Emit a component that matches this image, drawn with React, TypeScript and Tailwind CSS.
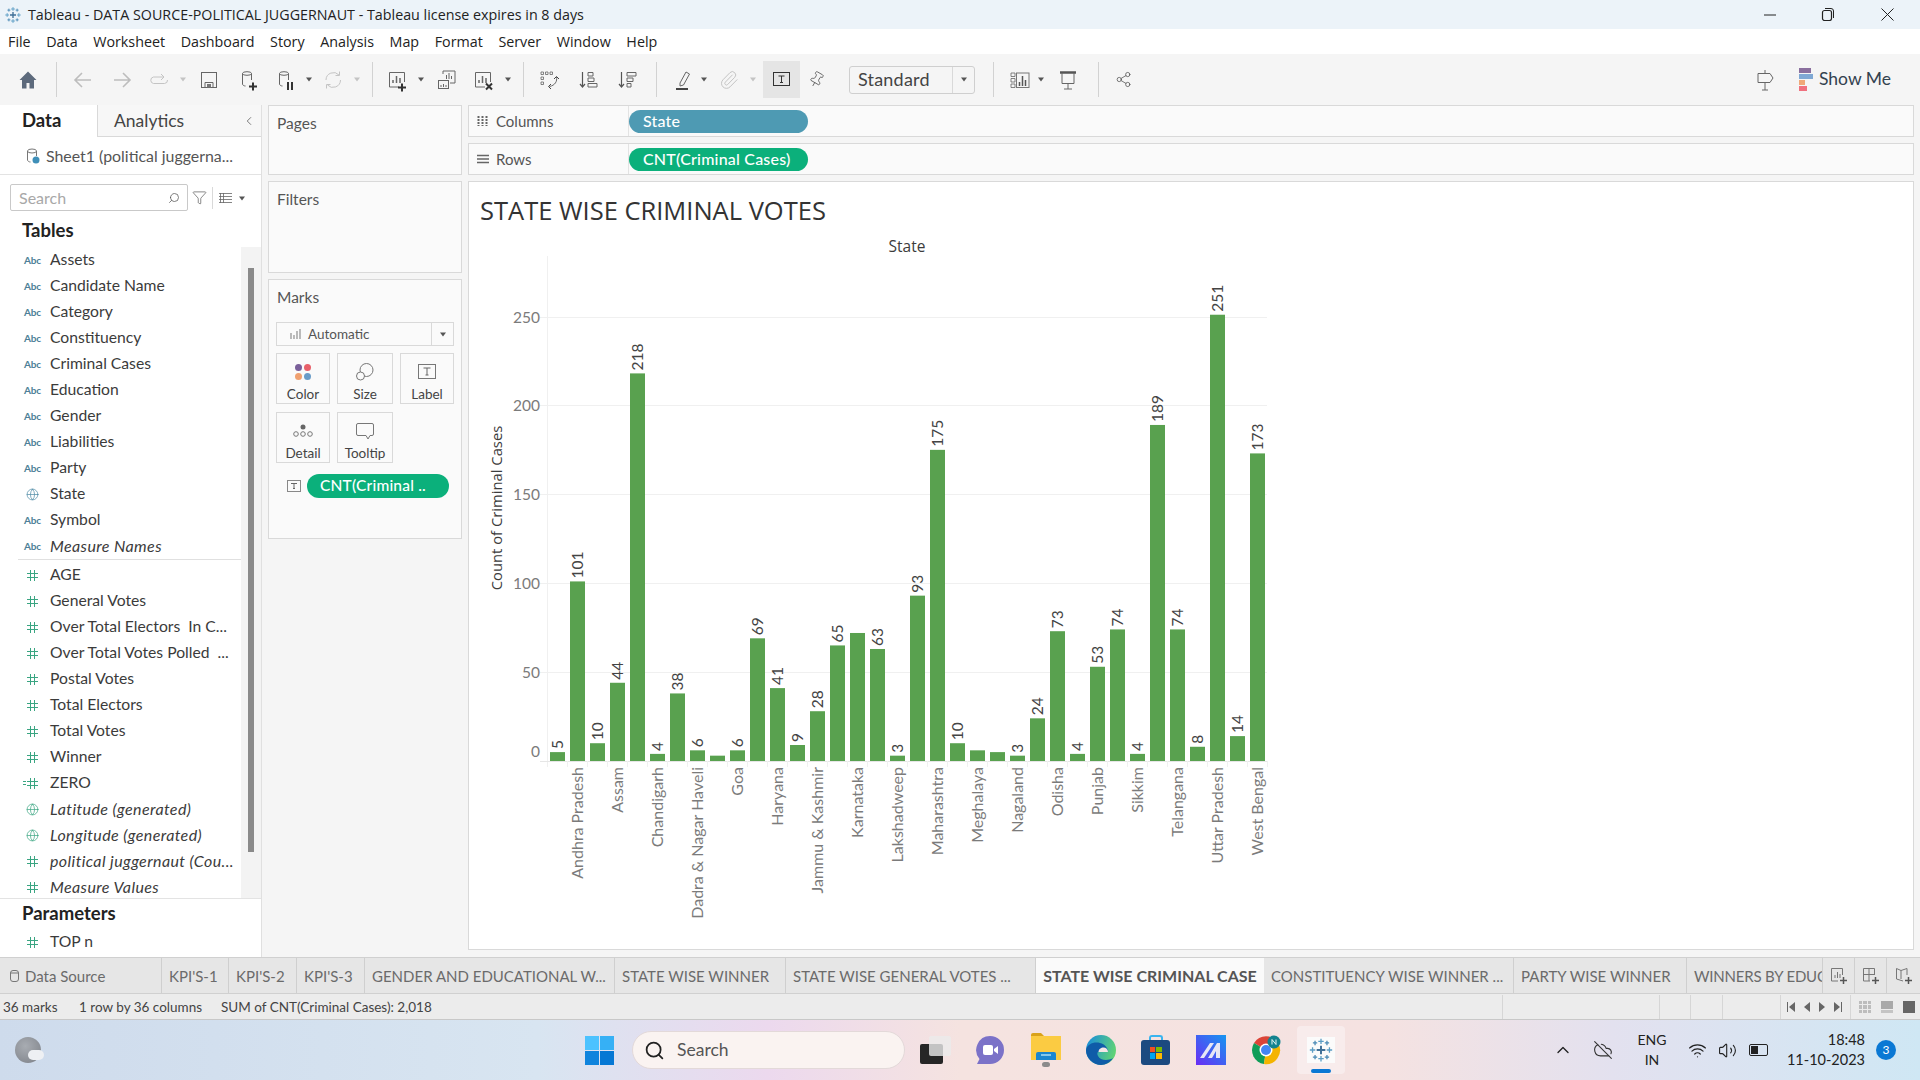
import type { ReactNode } from "react";
import { ChevronLeft, ChevronUp, CloudOff, Funnel, Globe, Paperclip, Pin, Search, Share2, Volume2, Wifi } from "lucide-react";

const menus = ["File", "Data", "Worksheet", "Dashboard", "Story", "Analysis", "Map", "Format", "Server", "Window", "Help"];

const tableFields = [
  { name: "Assets", kind: "abc" },
  { name: "Candidate Name", kind: "abc" },
  { name: "Category", kind: "abc" },
  { name: "Constituency", kind: "abc" },
  { name: "Criminal Cases", kind: "abc" },
  { name: "Education", kind: "abc" },
  { name: "Gender", kind: "abc" },
  { name: "Liabilities", kind: "abc" },
  { name: "Party", kind: "abc" },
  { name: "State", kind: "globe" },
  { name: "Symbol", kind: "abc" },
  { name: "Measure Names", kind: "abc", italic: true },
];

const measureFields = [
  { name: "AGE", kind: "num" },
  { name: "General Votes", kind: "num" },
  { name: "Over Total Electors  In C...", kind: "num" },
  { name: "Over Total Votes Polled  ...", kind: "num" },
  { name: "Postal Votes", kind: "num" },
  { name: "Total Electors", kind: "num" },
  { name: "Total Votes", kind: "num" },
  { name: "Winner", kind: "num" },
  { name: "ZERO", kind: "calc" },
  { name: "Latitude (generated)", kind: "geo", italic: true },
  { name: "Longitude (generated)", kind: "geo", italic: true },
  { name: "political juggernaut (Cou...", kind: "num", italic: true },
  { name: "Measure Values", kind: "num", italic: true },
];

// value, axis label (every other state), whether the mark label fits
const bars: [number, string, boolean][] = [
  [5, "", true], [101, "Andhra Pradesh", true], [10, "", true], [44, "Assam", true],
  [218, "", true], [4, "Chandigarh", true], [38, "", true], [6, "Dadra & Nagar Haveli", true],
  [3, "", false], [6, "Goa", true], [69, "", true], [41, "Haryana", true],
  [9, "", true], [28, "Jammu & Kashmir", true], [65, "", true], [72, "Karnataka", false],
  [63, "", true], [3, "Lakshadweep", true], [93, "", true], [175, "Maharashtra", true],
  [10, "", true], [6, "Meghalaya", false], [5, "", false], [3, "Nagaland", true],
  [24, "", true], [73, "Odisha", true], [4, "", true], [53, "Punjab", true],
  [74, "", true], [4, "Sikkim", true], [189, "", true], [74, "Telangana", true],
  [8, "", true], [251, "Uttar Pradesh", true], [14, "", true], [173, "West Bengal", true],
];

const Ico = ({ className = "", children }: { className?: string; children: ReactNode }) => (
  <svg width="24" height="24" viewBox="0 0 24 24" fill="none" className={`shrink-0 ${className}`}>
    {children}
  </svg>
);

const Caret = ({ className = "", muted = false }: { className?: string; muted?: boolean }) => (
  <svg width="8" height="5" viewBox="0 0 8 5" className={`shrink-0 ${className}`}>
    <path d="M1 .5h6L4 4.500z" fill={muted ? "#c4c4c4" : "#555"} />
  </svg>
);

const Sep = ({ className = "" }: { className?: string }) => <div className={`h-[35px] w-px shrink-0 bg-[#d2d2d2] ${className}`} />;

const Cyl = () => (
  <>
    <ellipse cx="11" cy="5.5" rx="4.5" ry="1.8" stroke="#666" />
    <path d="M6.500 5.500V16c0 1.200 1.500 2 3 2M15.500 5.500V12" stroke="#666" />
  </>
);

const SheetBars = () => (
  <>
    <path d="M14 19H4.500V4.500h15V14" stroke="#666" />
    <path d="M8 15v-3M11.500 15V8M15 15v-5" stroke="#666" strokeWidth="1.500" />
  </>
);

function TableauLogo({ size = 18 }: { size?: number }) {
  return (
    <svg width={size} height={size} viewBox="0 0 24 24" className="shrink-0">
      <path d="M12 8v8M8 12h8" stroke="#3f6f97" strokeWidth="1.800" />
      <path d="M12 1.500v5M9.500 4h5M12 17.500v5M9.500 20h5M19.800 9.500v5M17.300 12h5M4.200 9.500v5M1.700 12h5" stroke="#5a9cc4" strokeWidth="1.200" />
      <path d="M6.500 3.500v4M4.500 5.500h4M17.500 3.500v4M15.500 5.500h4M6.500 16.500v4M4.500 18.500h4M17.500 16.500v4M15.500 18.500h4" stroke="#4a8ab5" strokeWidth="1.200" />
    </svg>
  );
}

function FieldIcon({ kind }: { kind: string }) {
  if (kind === "abc") return <span className="block w-[17px] text-[10px] font-bold tracking-[-0.2px] text-[#4d7f97]">Abc</span>;
  if (kind === "globe" || kind === "geo") {
    return <Globe size={13} strokeWidth={1.300} className={kind === "globe" ? "ml-[2px] text-[#4d8aa5]" : "ml-[2px] text-[#3aa582]"} />;
  }
  return (
    <span className="relative ml-[3px] block h-[11px] w-[11px]">
      {kind === "calc" && <span className="absolute left-[-4px] top-[3px] h-[4px] w-[3px] border-y border-[#3aa582]" />}
      <svg width="11" height="11" viewBox="0 0 11 11">
        <path d="M3.500 0v11M7.500 0v11M0 3.500h11M0 7.500h11" stroke="#3aa582" />
      </svg>
    </span>
  );
}

function FieldRow({ name, kind, italic }: { name: string; kind: string; italic?: boolean }) {
  return (
    <div className="flex h-[26px] items-center pl-[24px]">
      <div className="flex w-[26px] shrink-0 items-center">
        <FieldIcon kind={kind} />
      </div>
      <span className={`whitespace-pre text-[#3b3b3b] ${italic ? "text-[16px] italic tracking-[0.4px]" : "text-[15.7px]"}`}>{name}</span>
    </div>
  );
}

function MarkButton({ label, className = "", children }: { label: string; className?: string; children: ReactNode }) {
  return (
    <div className={`flex h-[51px] flex-col items-center border border-[#d9d9d9] pt-[6px] ${className}`}>
      <div className="flex h-[24px] items-center">{children}</div>
      <span className="mt-[3px] text-[13.5px] leading-[14px] text-[#444]">{label}</span>
    </div>
  );
}

function Card({ title, className = "", children }: { title: string; className?: string; children?: ReactNode }) {
  return (
    <div className={`border border-[#d9d9d9] bg-[#fafafa] ${className}`}>
      <div className="pl-[8px] pt-[8px] text-[15.5px] leading-[18px] text-[#555]">{title}</div>
      {children}
    </div>
  );
}

function Shelf({ label, icon, pill, pillColor, className = "" }: { label: string; icon: ReactNode; pill: string; pillColor: string; className?: string }) {
  return (
    <div className={`flex h-[32px] items-center border border-[#d9d9d9] bg-[#fafafa] ${className}`}>
      <div className="flex h-full w-[160px] shrink-0 items-center border-r border-[#e3e3e3] pl-[8px]">
        <span className="flex w-[19px] items-center">{icon}</span>
        <span className="text-[15px] text-[#555]">{label}</span>
      </div>
      <div className={`flex h-[23px] w-[179px] items-center rounded-full pl-[14px] text-[16px] font-medium tracking-[0.2px] text-white ${pillColor}`}>{pill}</div>
    </div>
  );
}

function Chart() {
  const y = (v: number) => 762 - v * 1.778;
  return (
    <svg width="820" height="710" viewBox="469 235 820 710" className="block font-['Lato',sans-serif]">
      <path d="M547.500 257V768" stroke="#f0f0f0" />
      {[50, 100, 150, 200, 250].map((t) => (
        <path key={t} d={`M540 ${Math.round(y(t)) + 0.5}H1267`} stroke="#f0f0f0" />
      ))}
      <path d="M540 762.500H1267" stroke="#e6e6e6" />
      {bars.map((_, i) => (
        <path key={i} d={`M${567.5 + i * 20} 762V768`} stroke="#f0f0f0" />
      ))}
      {[50, 100, 150, 200, 250].map((t) => (
        <text key={t} x="540" y={y(t) + 6} textAnchor="end" fontSize="15.500" fill="#7b7b7b">
          {t}
        </text>
      ))}
      <text x="540" y="758" textAnchor="end" fontSize="15.500" fill="#7b7b7b">
        0
      </text>
      <text transform="translate(502 509) rotate(-90)" textAnchor="middle" fontSize="14.800" fill="#3c3c3c" className="font-['Open_Sans',sans-serif]">
        Count of Criminal Cases
      </text>
      <text x="907" y="253" textAnchor="middle" fontSize="15.500" fill="#3c3c3c" className="font-['Open_Sans',sans-serif]">
        State
      </text>
      {bars.map(([v, name, showValue], i) => {
        const cx = 557.5 + i * 20;
        return (
          <g key={i}>
            <rect x={550 + i * 20} y={y(v)} width="15" height={v * 1.778} fill="#59a14f" />
            {showValue && (
              <text transform={`translate(${cx + 5.500} ${y(v) - 3}) rotate(-90)`} fontSize="15.500" fill="#444">
                {v}
              </text>
            )}
            {name && (
              <text transform={`translate(${cx + 5.500} 768) rotate(-90)`} textAnchor="end" fontSize="16" fill="#7b7b7b">
                {name}
              </text>
            )}
          </g>
        );
      })}
    </svg>
  );
}

function Toolbar() {
  return (
    <div className="flex h-[51px] items-center bg-[#f5f5f5]">
      <Ico className="ml-[16px]">
        <path d="M12 3.500 3.500 12H6v8.500h4.500V15h3v5.500H18V12h2.500z" fill="#5d6a7c" />
      </Ico>
      <Sep className="ml-[16px]" />
      <Ico className="ml-[14px]">
        <path d="M20 12H4.500M11 5l-7 7 7 7" stroke="#bdbdbd" strokeWidth="1.600" />
      </Ico>
      <Ico className="ml-[15px]">
        <path d="M4 12h15.500M13 5l7 7-7 7" stroke="#bdbdbd" strokeWidth="1.600" />
      </Ico>
      <Ico className="ml-[13px]">
        <path d="M16 9H6.500a3.300 3.300 0 0 0 0 6.500h11a3.300 3.300 0 0 0 3-3.500" stroke="#c4c4c4" />
        <path d="M14 6l3 3-3 3" stroke="#c4c4c4" />
      </Ico>
      <Caret muted className="ml-[8px]" />
      <Ico className="ml-[10px]">
        <rect x="4.500" y="4.500" width="15" height="15" stroke="#666" />
        <path d="M8 19.500v-5h8v5" stroke="#666" />
        <rect x="10" y="16" width="4" height="3.500" fill="#777" />
      </Ico>
      <Ico className="ml-[15px]">
        <Cyl />
        <path d="M13 18.500h8M17 14.500v8" stroke="#333" strokeWidth="2" />
      </Ico>
      <Ico className="ml-[13px]">
        <Cyl />
        <path d="M15 14v8M19 14v8" stroke="#333" strokeWidth="2" />
      </Ico>
      <Caret className="ml-[8px]" />
      <Ico className="ml-[8px]">
        <path d="M5 12a7.500 7.500 0 0 1 13-5M19.500 12a7.500 7.500 0 0 1-13 5" stroke="#c4c4c4" />
        <path d="M18.500 3.500v4h-4M5.500 20.500v-4h4" stroke="#c4c4c4" />
      </Ico>
      <Caret muted className="ml-[8px]" />
      <Sep className="ml-[11px]" />
      <Ico className="ml-[12px]">
        <SheetBars />
        <path d="M13 19.500h8M17 15.500v8" stroke="#333" strokeWidth="2" />
      </Ico>
      <Caret className="ml-[8px]" />
      <Ico className="ml-[10px]">
        <path d="M8 6V3h12v12h-5" stroke="#666" />
        <path d="M11.500 11V7M14 11V5M16.500 11V8" stroke="#666" />
        <rect x="3.500" y="12.500" width="10" height="8" stroke="#666" />
        <path d="M6 19v-2M8.500 19v-3M11 19v-2" stroke="#666" />
      </Ico>
      <Ico className="ml-[12px]">
        <SheetBars />
        <path d="M15 15.500l6 6M21 15.500l-6 6" stroke="#333" strokeWidth="2" />
      </Ico>
      <Caret className="ml-[9px]" />
      <Sep className="ml-[11px]" />
      <Ico className="ml-[13px]">
        <path d="M4 4h2.500v2.500H4zM8.500 4H11v2.500H8.500zM13 4h2.500v2.500H13zM4 9h2.500v2.500H4zM4 14h2.500v2.500H4z" stroke="#666" strokeWidth="0.800" />
        <path d="M19.500 9c1 4-1.500 8.500-7 9.500" stroke="#666" />
        <path d="M17 11l2.500-2.500L22 11M14 16l-2.500 2.500L14 21" stroke="#444" />
      </Ico>
      <Ico className="ml-[15px]">
        <path d="M6.500 4v14.500M4 16l2.500 3L9 16" stroke="#555" strokeWidth="1.200" />
        <path d="M12 4.500h5v3.500h-5zM12 10h6v3.500h-6zM12 15.500h9V19h-9z" stroke="#666" />
      </Ico>
      <Ico className="ml-[15px]">
        <path d="M6.500 4v14.500M4 16l2.500 3L9 16" stroke="#555" strokeWidth="1.200" />
        <path d="M12 4.500h9V8h-9zM12 10h6v3.500h-6zM12 15.500h4V19h-4z" stroke="#666" />
      </Ico>
      <Sep className="ml-[17px]" />
      <Ico className="ml-[14px]">
        <path d="M9 15 15 4l3.500 2-6 11-3.500 1z" stroke="#666" />
        <rect x="5" y="20" width="12" height="2" fill="#444" />
      </Ico>
      <Caret className="ml-[5px]" />
      <Paperclip size={20} strokeWidth={1.200} className="ml-[11px] mr-[2px] shrink-0 text-[#c4c4c4]" />
      <Caret muted className="ml-[8px]" />
      <div className="ml-[6px] flex h-[37px] w-[37px] shrink-0 items-center justify-center bg-[#e5e5e5]">
        <svg width="18" height="15" viewBox="0 0 18 15">
          <rect x="0.500" y="0.500" width="16" height="13" fill="none" stroke="#333" />
          <path d="M5.500 4h6M8.500 4v6.500M7 10.500h3" stroke="#333" fill="none" />
        </svg>
      </div>
      <Pin size={17} strokeWidth={1.100} className="ml-[8px] mr-[4px] shrink-0 rotate-[30deg] text-[#555]" />
      <div className="ml-[20px] flex h-[28px] w-[126px] shrink-0 items-center rounded-[3px] border border-[#cfcfcf]">
        <span className="flex-1 pl-[8px] text-[18px] tracking-[0.2px] text-[#444]">Standard</span>
        <span className="flex h-full w-[22px] items-center justify-center border-l border-[#d9d9d9]">
          <Caret />
        </span>
      </div>
      <Sep className="ml-[18px]" />
      <Ico className="ml-[14px]">
        <path d="M3 5h4v3.500H3zM3 10.500h4V14H3zM3 16h4v3.500H3z" stroke="#666" strokeWidth="0.800" />
        <rect x="8.500" y="5" width="12.500" height="14.500" stroke="#777" />
        <path d="M11.500 18v-4M14.500 18V8M17.500 18v-6" stroke="#555" strokeWidth="1.500" />
      </Ico>
      <Caret className="ml-[5px]" />
      <Ico className="ml-[11px]">
        <path d="M4 4.500h16" stroke="#555" strokeWidth="2.500" />
        <path d="M6 5v10.500h12V5M12 15.500V21M8 21h8" stroke="#666" />
      </Ico>
      <Sep className="ml-[18px]" />
      <Share2 size={17} strokeWidth={1.100} className="ml-[16px] mr-[4px] shrink-0 text-[#555]" />
      <Ico className="ml-auto">
        <path d="M12 2v3M12 15v7M9 22h6" stroke="#666" />
        <path d="M5 5.500h12l3 4.500-3 4.500H5z" stroke="#666" />
      </Ico>
      <div className="ml-[22px] flex w-[14px] shrink-0 flex-col gap-[1px]">
        <span className="block h-[5px] w-[12px] bg-[#8a6f9e]" />
        <span className="block h-[5px] w-[14px] bg-[#7fa8d4]" />
        <span className="block h-[5px] w-[6px] bg-[#f0a878]" />
        <span className="block h-[5px] w-[8px] bg-[#f0717f]" />
      </div>
      <span className="ml-[6px] mr-[29px] text-[17.5px] text-[#33424f]">Show Me</span>
    </div>
  );
}

function DataPane() {
  return (
    <div className="flex w-[262px] shrink-0 flex-col border-r border-[#e0e0e0] bg-white">
      <div className="flex h-[32px] items-center">
        <div className="flex h-full w-[97px] items-center pl-[22px] text-[18.5px] font-bold text-[#222]">Data</div>
        <div className="flex h-full flex-1 items-center border-b border-l border-[#d9d9d9] bg-[#f7f7f7] pl-[16px] pt-[1px] text-[17.5px] text-[#444]">
          Analytics
          <ChevronLeft size={14} strokeWidth={1.300} className="ml-auto mr-[5px] text-[#555]" />
        </div>
      </div>
      <div className="flex h-[38px] items-center border-b border-[#e3e3e3] pl-[26px]">
        <svg width="14" height="16" viewBox="0 0 14 16" className="mr-[6px] shrink-0">
          <ellipse cx="6" cy="3" rx="4.500" ry="2" fill="none" stroke="#777" />
          <path d="M1.500 3v9c0 1 1.500 2 3 2M10.500 3v5" fill="none" stroke="#777" />
          <circle cx="10" cy="12" r="3.500" fill="#3f8fb8" />
        </svg>
        <span className="text-[15.9px] text-[#555]">Sheet1 (political juggerna...</span>
      </div>
      <div className="flex h-[36px] items-end pl-[10px]">
        <div className="flex h-[27px] w-[178px] items-center rounded-[2px] border border-[#c9c9c9] pl-[8px] pr-[7px]">
          <span className="flex-1 text-[16px] text-[#a8a8a8]">Search</span>
          <Search size={12} strokeWidth={1.500} className="-scale-x-100 text-[#555]" />
        </div>
        <Funnel size={15} strokeWidth={1.100} className="mb-[6px] ml-[4px] text-[#555]" />
        <div className="mb-[2px] ml-[5px] h-[22px] w-px bg-[#d9d9d9]" />
        <svg width="13" height="10" viewBox="0 0 13 10" className="mb-[8px] ml-[6px]">
          <path d="M0 .500h13M0 3.500h13M0 6.500h13M0 9.500h13M1.500 0v10M4.500 0v10" stroke="#666" strokeWidth="0.800" />
        </svg>
        <Caret className="mb-[10px] ml-[6px]" />
      </div>
      <div className="flex h-[36px] items-center pl-[22px] pt-[4px] text-[18.5px] font-bold text-[#222]">Tables</div>
      <div className="flex h-[651px] shrink-0">
        <div className="flex-1">
          <div className="ml-[18px] border-b border-[#e0e0e0]">
            <div className="-ml-[18px]">
              {tableFields.map((f) => (
                <FieldRow key={f.name} {...f} />
              ))}
            </div>
          </div>
          <div className="mt-[2px]">
            {measureFields.map((f) => (
              <FieldRow key={f.name} {...f} />
            ))}
          </div>
        </div>
        <div className="w-[20px] shrink-0 bg-[#f3f3f3] pt-[21px]">
          <div className="mx-auto h-[584px] w-[6px] bg-[#8a8a8a]" />
        </div>
      </div>
      <div className="flex-1 border-t border-[#e3e3e3]">
        <div className="flex h-[30px] items-center pl-[22px] text-[18.5px] font-bold text-[#222]">Parameters</div>
        <FieldRow name="TOP n" kind="num" />
      </div>
    </div>
  );
}

function CardsColumn() {
  return (
    <div className="ml-[6px] flex w-[194px] shrink-0 flex-col gap-[6px]">
      <Card title="Pages" className="h-[70px]" />
      <Card title="Filters" className="h-[92px]" />
      <Card title="Marks" className="h-[260px]">
        <div className="mx-[7px] mt-[16px] flex h-[24px] items-center border border-[#d9d9d9] text-[13.5px] text-[#555]">
          <svg width="11" height="10" viewBox="0 0 11 10" className="ml-[13px] mr-[7px]">
            <path d="M1 10V4M4 10V6M7 10V2M10 10V0" stroke="#aaa" strokeWidth="1.600" />
          </svg>
          <span className="flex-1">Automatic</span>
          <span className="flex h-full w-[22px] items-center justify-center border-l border-[#d9d9d9]">
            <Caret />
          </span>
        </div>
        <div className="mx-[7px] mt-[7px] grid grid-cols-[54px_56px_54px] gap-x-[7px] gap-y-[8px]">
          <MarkButton label="Color">
            <div className="grid grid-cols-2 gap-[2px]">
              <span className="h-[7px] w-[7px] rounded-full bg-[#7a5f9a]" />
              <span className="h-[7px] w-[7px] rounded-full bg-[#e8606a]" />
              <span className="h-[7px] w-[7px] rounded-full bg-[#f0a070]" />
              <span className="h-[7px] w-[7px] rounded-full bg-[#6a9cc8]" />
            </div>
          </MarkButton>
          <MarkButton label="Size">
            <svg width="18" height="18" viewBox="0 0 18 18">
              <circle cx="10.500" cy="7" r="6.500" fill="none" stroke="#777" />
              <circle cx="4.500" cy="13" r="4" fill="#fafafa" stroke="#777" />
            </svg>
          </MarkButton>
          <MarkButton label="Label">
            <svg width="18" height="16" viewBox="0 0 18 16">
              <rect x="0.500" y="0.500" width="17" height="14" fill="none" stroke="#777" />
              <path d="M5.500 4h7M9 4v7M7.500 11h3" fill="none" stroke="#666" />
            </svg>
          </MarkButton>
          <MarkButton label="Detail">
            <svg width="20" height="14" viewBox="0 0 20 14">
              <circle cx="10" cy="3" r="2.500" fill="#666" />
              <circle cx="3" cy="10" r="2.300" fill="none" stroke="#777" />
              <circle cx="10" cy="10" r="2.300" fill="none" stroke="#777" />
              <circle cx="17" cy="10" r="2.300" fill="none" stroke="#777" />
            </svg>
          </MarkButton>
          <MarkButton label="Tooltip">
            <svg width="18" height="17" viewBox="0 0 18 17">
              <path d="M2 .500h14a1.500 1.500 0 0 1 1.500 1.500v9a1.500 1.500 0 0 1-1.500 1.500h-2l-2 3.500-2-3.500H2A1.500 1.500 0 0 1 .500 11V2A1.500 1.500 0 0 1 2 .500z" fill="none" stroke="#777" />
            </svg>
          </MarkButton>
        </div>
        <div className="mt-[11px] flex items-center pl-[18px]">
          <svg width="14" height="12" viewBox="0 0 14 12" className="shrink-0">
            <rect x="0.500" y="0.500" width="13" height="11" fill="none" stroke="#888" />
            <path d="M4 3.500h6M7 3.500v5M6 8.500h2" fill="none" stroke="#666" />
          </svg>
          <div className="ml-[6px] flex h-[24px] w-[142px] items-center rounded-full bg-[#0bb07b] pl-[13px] text-[15.5px] font-medium tracking-[0.2px] text-white">CNT(Criminal ..</div>
        </div>
      </Card>
    </div>
  );
}

function Tab({ label, className }: { label: string; className: string }) {
  return <div className={`flex h-full shrink-0 items-center overflow-hidden whitespace-nowrap border-r border-[#cfcfcf] pl-[7px] pt-[1px] text-[15px] text-[#6b6b6b] ${className}`}>{label}</div>;
}

function TabStrip() {
  return (
    <div className="flex h-[37px] border-y border-[#d0d0d0] bg-[#e6e6e6]">
      <div className="flex h-full w-[162px] shrink-0 items-center border-r border-[#cfcfcf] pl-[10px] pt-[1px] text-[15px] text-[#6b6b6b]">
        <svg width="9" height="12" viewBox="0 0 9 12" className="mr-[6px]">
          <rect x="0.500" y="0.500" width="8" height="11" rx="2.500" fill="none" stroke="#777" />
          <path d="M.500 3h8" stroke="#777" />
        </svg>
        Data Source
      </div>
      <Tab label="KPI'S-1" className="w-[67px]" />
      <Tab label="KPI'S-2" className="w-[68px]" />
      <Tab label="KPI'S-3" className="w-[68px]" />
      <Tab label="GENDER AND EDUCATIONAL W..." className="w-[250px]" />
      <Tab label="STATE WISE WINNER" className="w-[171px]" />
      <Tab label="STATE WISE GENERAL VOTES ..." className="w-[250px]" />
      <div className="flex h-full w-[228px] shrink-0 items-center justify-center bg-[#fafafa] text-[16px] font-bold text-[#555]">STATE WISE CRIMINAL CASE</div>
      <Tab label="CONSTITUENCY WISE WINNER ..." className="w-[250px]" />
      <Tab label="PARTY WISE WINNER" className="w-[173px]" />
      <Tab label="WINNERS BY EDUC" className="w-[136px] tracking-[-0.2px]" />
      <div className="flex h-full w-[32px] items-center justify-center border-r border-[#cfcfcf]">
        <svg width="17" height="17" viewBox="0 0 17 17">
          <path d="M8 14H1.500V1.500h11V8" fill="none" stroke="#777" />
          <path d="M5 11V8M7.500 11V5M10 11V7" stroke="#777" />
          <path d="M10 13.500h7M13.500 10v7" stroke="#555" strokeWidth="1.500" />
        </svg>
      </div>
      <div className="flex h-full w-[32px] items-center justify-center border-r border-[#cfcfcf]">
        <svg width="17" height="17" viewBox="0 0 17 17">
          <path d="M8 14H1.500V1.500h11V8M1.500 7.500h11M7 1.500V14" fill="none" stroke="#777" />
          <path d="M10 13.500h7M13.500 10v7" stroke="#555" strokeWidth="1.500" />
        </svg>
      </div>
      <div className="flex h-full flex-1 items-center justify-center">
        <svg width="17" height="17" viewBox="0 0 17 17">
          <path d="M8 14 1.500 12V1.500l4.500 2 6-2V8M6 3.500V12" fill="none" stroke="#777" />
          <path d="M10 13.500h7M13.500 10v7" stroke="#555" strokeWidth="1.500" />
        </svg>
      </div>
    </div>
  );
}

function StatusBar() {
  return (
    <div className="flex h-[26px] items-center border-b border-[#c8c8c8] bg-[#ececec] pt-[1px] text-[13.5px] text-[#444]">
      <span className="w-[79px] shrink-0 pl-[3px]">36 marks</span>
      <span className="w-[142px] shrink-0">1 row by 36 columns</span>
      <span className="w-[1281px] shrink-0">SUM of CNT(Criminal Cases): 2,018</span>
      <div className="h-full w-[157px] shrink-0 border-l border-[#d6d6d6]" />
      <div className="h-full w-[31px] shrink-0 border-l border-[#d6d6d6]" />
      <div className="h-full w-[32px] shrink-0 border-l border-[#d6d6d6]" />
      <div className="h-full w-[58px] shrink-0 border-l border-[#d6d6d6]" />
      <div className="flex h-full w-[70px] shrink-0 items-center gap-[9px] border-l border-[#d6d6d6] pl-[6px]">
        <svg width="8" height="10" viewBox="0 0 8 10"><path d="M.500 0v10" stroke="#666" /><path d="M8 0v10L2 5z" fill="#666" /></svg>
        <svg width="6" height="10" viewBox="0 0 6 10"><path d="M6 0v10L0 5z" fill="#666" /></svg>
        <svg width="6" height="10" viewBox="0 0 6 10"><path d="M0 0v10l6-5z" fill="#666" /></svg>
        <svg width="8" height="10" viewBox="0 0 8 10"><path d="M7.500 0v10" stroke="#666" /><path d="M0 0v10l6-5z" fill="#666" /></svg>
      </div>
      <div className="flex h-full flex-1 items-center gap-[10px] border-l border-[#d6d6d6] pl-[8px]">
        <div className="grid h-[12px] w-[12px] grid-cols-3 gap-[1px]">
          {[0, 1, 2, 3, 4, 5, 6, 7, 8].map((n) => (
            <span key={n} className="bg-[#bdbdbd]" />
          ))}
        </div>
        <div className="flex h-[12px] w-[12px] flex-col gap-[1px]">
          <span className="h-[8px] bg-[#a9a9a9]" />
          <span className="h-[3px] bg-[#c4c4c4]" />
        </div>
        <span className="h-[12px] w-[12px] bg-[#666]" />
      </div>
    </div>
  );
}

function Taskbar() {
  return (
    <div className="flex h-[60px] items-center bg-[linear-gradient(90deg,#cedbec_0%,#d8e5f1_28%,#ecd9ee_40%,#f5e3e0_50%,#f5e2e1_72%,#e3e1ef_84%,#cfe7f4_100%)]">
      <div className="relative ml-[15px] h-[26px] w-[26px] shrink-0 rounded-full bg-[radial-gradient(circle_at_40%_35%,#a8acb2,#7c8087)]">
        <span className="absolute bottom-[3px] right-[-3px] h-[10px] w-[16px] rounded-full bg-[#eef0f3]" />
      </div>
      <div className="ml-[544px] grid h-[29px] w-[29px] shrink-0 grid-cols-2 gap-[1px]">
        <span className="bg-[#4cc2ff]" />
        <span className="bg-[#36b0f5]" />
        <span className="bg-[#0f84dd]" />
        <span className="bg-[#0678d4]" />
      </div>
      <div className="ml-[18px] flex h-[38px] w-[273px] shrink-0 items-center rounded-full border border-[#e3d9d9] bg-[#faf3f1] pl-[11px] text-[17.5px] text-[#555]">
        <Search size={21} strokeWidth={2} className="mr-[12px] text-[#222]" />
        Search
      </div>
      <div className="relative ml-[15px] h-[28px] w-[31px] shrink-0">
        <span className="absolute bottom-0 left-0 h-[20px] w-[23px] rounded-[2px] bg-[#262626]" />
        <span className="absolute right-0 top-0 h-[20px] w-[22px] rounded-[2px] bg-[#ebebebcc]" />
      </div>
      <svg width="30" height="30" viewBox="0 0 30 30" className="ml-[24px] shrink-0">
        <path d="M15 1a14 14 0 0 1 0 28H2l2.500-5A14 14 0 0 1 15 1z" fill="#7b72c8" />
        <rect x="8" y="10" width="10" height="10" rx="2" fill="#fff" />
        <path d="M19 14l4-3v8l-4-3z" fill="#fff" />
      </svg>
      <div className="relative ml-[26px] h-[34px] w-[30px] shrink-0">
        <svg width="30" height="27" viewBox="0 0 30 27" className="block">
          <path d="M0 2a2 2 0 0 1 2-2h8l3 3h-13z" fill="#d9a21b" />
          <path d="M0 3h30v24H0z" fill="#fbcb42" />
          <path d="M5 21a2 2 0 0 1 2-2h16a2 2 0 0 1 2 2v6H5z" fill="#1a86cf" />
          <path d="M10 22h10" stroke="#a8dcf5" strokeWidth="1.500" />
        </svg>
        <span className="absolute bottom-0 left-[11px] h-[5px] w-[8px] rounded-full bg-[#8b8b8b]" />
      </div>
      <svg width="30" height="30" viewBox="0 0 30 30" className="ml-[25px] shrink-0">
        <defs>
          <linearGradient id="edge" x1="0" y1="0.300" x2="1" y2="0.600">
            <stop offset="0" stopColor="#1b8fd8" />
            <stop offset="1" stopColor="#62d572" />
          </linearGradient>
        </defs>
        <circle cx="15" cy="15" r="15" fill="url(#edge)" />
        <path d="M0 15C1 9 8 6.500 14 8c5 1.200 8 5 8 9H12.500c-1.500 0-1.500 2-.5 4 2 4 9 5.500 15 2-2.500 4-7 7-12 7C7 30 0 23 0 15z" fill="#0f5ca8" />
        <path d="M12.500 17c0-3 2.500-4.500 5-4.500 2.500 0 4.500 2 4.500 4.500z" fill="#f3e6e6" />
      </svg>
      <div className="ml-[25px] flex h-[30px] w-[29px] shrink-0 flex-col items-center">
        <span className="h-[5px] w-[14px] rounded-t-[3px] border-x-2 border-t-2 border-[#3ab4ef]" />
        <div className="flex h-[25px] w-full items-center justify-center rounded-[3px] bg-[#1c4a80]">
          <div className="grid h-[12px] w-[12px] grid-cols-2 gap-[1px]">
            <span className="bg-[#f25022]" />
            <span className="bg-[#7fba00]" />
            <span className="bg-[#00a4ef]" />
            <span className="bg-[#ffb900]" />
          </div>
        </div>
      </div>
      <svg width="30" height="30" viewBox="0 0 30 30" className="ml-[26px] shrink-0">
        <defs>
          <linearGradient id="mapp" x1="0" y1="1" x2="1" y2="0">
            <stop offset="0" stopColor="#6a2cf5" />
            <stop offset="1" stopColor="#1696f0" />
          </linearGradient>
        </defs>
        <rect width="30" height="30" fill="url(#mapp)" />
        <path d="M4 23 14 8h4L8 23zM12 23 21 8h3v15h-4v-7l-4 7z" fill="#e6e6f5" />
      </svg>
      <svg width="30" height="30" viewBox="0 0 30 30" className="ml-[25px] shrink-0">
        <path d="M15 15 3 8A14 14 0 0 1 27 8z" fill="#db4437" />
        <path d="M15 15 3 8A14 14 0 0 0 13 29z" fill="#0f9d58" />
        <path d="M15 15 27 8a14 14 0 0 1-14 21z" fill="#f4b400" />
        <circle cx="15" cy="15" r="6.500" fill="#fff" />
        <circle cx="15" cy="15" r="5" fill="#4285f4" />
        <circle cx="23" cy="7" r="6.500" fill="#14838f" />
        <path d="M21 9.500v-5l4 5v-5" fill="none" stroke="#e6f4f4" />
      </svg>
      <div className="relative ml-[16px] flex h-[48px] w-[48px] shrink-0 items-center justify-center rounded-[4px] bg-[#f8ecec]">
        <div className="flex h-[26px] w-[28px] items-center justify-center bg-[#fbfbfb]">
          <TableauLogo size={26} />
        </div>
        <span className="absolute bottom-[1px] left-[14px] h-[4px] w-[20px] rounded-full bg-[#0a78d4]" />
      </div>
      <ChevronUp size={20} strokeWidth={1.600} className="ml-[208px] shrink-0 text-[#222]" />
      <CloudOff size={20} strokeWidth={1.300} className="ml-[20px] shrink-0 text-[#333]" />
      <div className="ml-[21px] w-[36px] shrink-0 text-center text-[14px] leading-[20px] text-[#222]">
        <div>ENG</div>
        <div>IN</div>
      </div>
      <Wifi size={19} strokeWidth={1.500} className="ml-[18px] shrink-0 text-[#222]" />
      <Volume2 size={19} strokeWidth={1.400} className="ml-[11px] shrink-0 text-[#222]" />
      <div className="ml-[12px] flex h-[12px] w-[19px] shrink-0 items-center rounded-[2px] border border-[#222] pl-[1px]">
        <span className="h-[8px] w-[7px] bg-[#222]" />
      </div>
      <div className="ml-[16px] w-[81px] shrink-0 text-right text-[14.5px] leading-[20px] text-[#222]">
        <div>18:48</div>
        <div>11-10-2023</div>
      </div>
      <div className="ml-[11px] flex h-[20px] w-[20px] shrink-0 items-center justify-center rounded-full bg-[#0a78d4] text-[12px] text-white">3</div>
    </div>
  );
}

export default function App() {
  return (
    <div className="flex h-[1080px] w-[1920px] flex-col overflow-hidden bg-[#f5f5f5] font-['Lato',sans-serif]">
      <div className="flex h-[29px] shrink-0 items-center bg-[#ecf3f9] font-['Open_Sans',sans-serif]">
        <div className="ml-[4px] flex w-[24px] shrink-0 items-center">
          <TableauLogo size={18} />
        </div>
        <span className="text-[14.3px] text-[#222]">Tableau - DATA SOURCE-POLITICAL JUGGERNAUT - Tableau license expires in 8 days</span>
        <svg width="12" height="2" viewBox="0 0 12 2" className="ml-auto shrink-0">
          <path d="M0 1h12" stroke="#222" />
        </svg>
        <svg width="13" height="13" viewBox="0 0 13 13" className="ml-[45px] shrink-0">
          <rect x="1.500" y="2.500" width="9" height="10" rx="2" fill="none" stroke="#222" strokeWidth="1.200" />
          <path d="M4 .500h6a2.500 2.500 0 0 1 2.500 2.500v7" fill="none" stroke="#222" />
        </svg>
        <svg width="13" height="13" viewBox="0 0 13 13" className="ml-[47px] mr-[26px] shrink-0">
          <path d="M.500.500l12 12M12.500.500l-12 12" stroke="#222" />
        </svg>
      </div>
      <div className="flex h-[25px] shrink-0 items-center gap-[15.6px] bg-white pl-[8px] font-['Open_Sans',sans-serif] text-[14.3px] text-[#222]">
        {menus.map((m) => (
          <span key={m}>{m}</span>
        ))}
      </div>
      <Toolbar />
      <div className="flex h-[852px] shrink-0">
        <DataPane />
        <CardsColumn />
        <div className="ml-[6px] flex w-[1446px] shrink-0 flex-col gap-[6px]">
          <Shelf
            label="Columns"
            pill="State"
            pillColor="bg-[#4e9ab3]"
            icon={
              <svg width="11" height="10" viewBox="0 0 11 10">
                <path d="M1.500 0v10M5.500 0v10M9.500 0v10" stroke="#666" strokeWidth="2" strokeDasharray="2 1" />
              </svg>
            }
          />
          <Shelf
            label="Rows"
            pill="CNT(Criminal Cases)"
            pillColor="bg-[#0bb07b]"
            icon={
              <svg width="12" height="10" viewBox="0 0 12 10">
                <path d="M0 1.500h12M0 5h12M0 8.500h12" stroke="#666" strokeWidth="1.600" />
              </svg>
            }
          />
          <div className="h-[769px] border border-[#d9d9d9] bg-white">
            <div className="flex h-[52px] items-center pl-[11px] pt-[5px] font-['Open_Sans',sans-serif] text-[25.5px] text-[#333]">STATE WISE CRIMINAL VOTES</div>
            <Chart />
          </div>
        </div>
      </div>
      <TabStrip />
      <StatusBar />
      <Taskbar />
    </div>
  );
}
